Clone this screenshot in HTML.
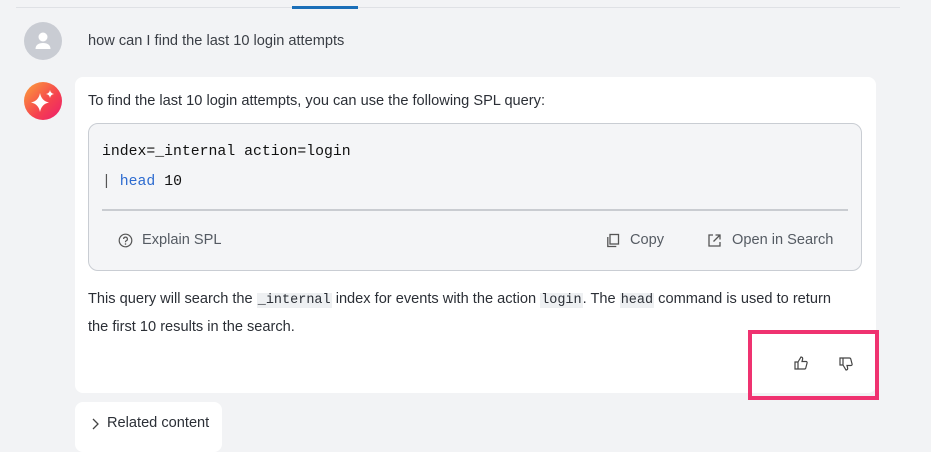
<!DOCTYPE html>
<html><head><style>
*{margin:0;padding:0;box-sizing:border-box}
body{width:931px;height:446px;background:#f2f3f5;font-family:"Liberation Sans",sans-serif;color:#2b2f36;position:relative;overflow:hidden;font-size:14.6px}
.abs{position:absolute}
.mono{font-family:"Liberation Mono",monospace}
code{font-family:"Liberation Mono",monospace;background:#eef0f2;font-size:13.5px;padding:0 1px}
</style></head><body>
<div class="abs" style="left:16px;top:7px;width:884px;height:1px;background:#dfe1e5"></div>
<div class="abs" style="left:292px;top:6px;width:66px;height:3px;background:#1a6fb8"></div>
<div class="abs" style="left:24px;top:22px;width:38px;height:38px;border-radius:50%;background:#c9ccd3">
<svg width="38" height="38" viewBox="0 0 38 38"><circle cx="19" cy="15" r="4.5" fill="#fff"/><path d="M11.5 27c0-4 3-6 7.5-6s7.5 2 7.5 6z" fill="#fff"/></svg></div>
<div class="abs" style="left:88px;top:33px;color:#3a3e45">how can I find the last 10 login attempts</div>
<div class="abs" style="left:24px;top:82px;width:38px;height:38px;border-radius:50%;background:linear-gradient(135deg,#fba23a,#f5404f 60%,#ec1d6e)">
<svg width="38" height="38" viewBox="0 0 38 38"><path d="M16 11 Q17.5 19 25 20.5 Q17.5 22 16 30 Q14.5 22 7 20.5 Q14.5 19 16 11Z" fill="#fff"/><path d="M26 8 Q26.6 11.4 30 12 Q26.6 12.6 26 16 Q25.4 12.6 22 12 Q25.4 11.4 26 8Z" fill="#fff"/></svg></div>
<div class="abs" style="left:75px;top:77px;width:801px;height:316px;background:#fff;border-radius:8px"></div>
<div class="abs" style="left:88px;top:93px;color:#2b2f36">To find the last 10 login attempts, you can use the following SPL query:</div>
<div class="abs" style="left:88px;top:123px;width:774px;height:148px;background:#f4f5f7;border:1px solid #c9cdd3;border-radius:10px"></div>
<div class="abs mono" style="left:102px;top:144px;font-size:14.8px;color:#111">index=_internal action=login</div>
<div class="abs mono" style="left:102px;top:174px;font-size:14.8px;color:#111"><span style="color:#555">|</span> <span style="color:#2d6bd0">head</span> 10</div>
<div class="abs" style="left:102px;top:209px;width:746px;height:2px;background:#c9ccd1"></div>
<svg class="abs" style="left:118px;top:233px" width="15" height="15" viewBox="0 0 15 15"><circle cx="7.5" cy="7.5" r="6.3" fill="none" stroke="#555" stroke-width="1.2"/><path d="M5.6 6a1.9 1.9 0 1 1 2.6 1.8c-.5.2-.7.6-.7 1.1v.4" fill="none" stroke="#555" stroke-width="1.2"/><circle cx="7.5" cy="11" r=".8" fill="#555"/></svg>
<div class="abs" style="left:142px;top:232px;color:#555b63">Explain SPL</div>
<svg class="abs" style="left:606px;top:233px" width="15" height="15" viewBox="0 0 15 15"><rect x="4" y="1.5" width="8.5" height="9.5" fill="none" stroke="#555" stroke-width="1.3"/><path d="M1.8 4v9.5h8.5" fill="none" stroke="#555" stroke-width="1.3"/></svg>
<div class="abs" style="left:630px;top:232px;color:#555b63">Copy</div>
<svg class="abs" style="left:707px;top:233px" width="15" height="15" viewBox="0 0 15 15"><path d="M6 2H2v11h11V9M8.5 2h4.5v4.5M13 2L6.5 8.5" fill="none" stroke="#555" stroke-width="1.3"/></svg>
<div class="abs" style="left:732px;top:232px;color:#555b63">Open in Search</div>
<div class="abs" style="left:88px;top:286px;line-height:26px;width:760px;color:#2b2f36">This query will search the <code>_internal</code> index for events with the action <code>login</code>. The <code>head</code> command is used to return the first 10 results in the search.</div>
<div class="abs" style="left:748px;top:330px;width:131px;height:70px;border:4px solid #ef3270"></div>
<svg class="abs" style="left:793px;top:355px" width="16" height="16" viewBox="0 0 16 16"><path d="M2 7h3v7H2zM5 7l3-5c1 0 2 .8 1.6 2.2L9 6.5h4c.8 0 1.3.7 1.1 1.4l-1.3 5c-.2.7-.8 1.1-1.4 1.1H5" fill="none" stroke="#444" stroke-width="1.2"/></svg>
<svg class="abs" style="left:838px;top:356px" width="16" height="16" viewBox="0 0 16 16"><path d="M2 2h3v7H2zM5 9l3 5c1 0 2-.8 1.6-2.2L9 9.5h4c.8 0 1.3-.7 1.1-1.4l-1.3-5C12.6 2.4 12 2 11.4 2H5" fill="none" stroke="#444" stroke-width="1.2"/></svg>
<div class="abs" style="left:75px;top:402px;width:147px;height:50px;background:#fff;border-radius:8px"></div>
<svg class="abs" style="left:90px;top:417px" width="10" height="14" viewBox="0 0 10 14"><path d="M3 2l5 5-5 5" fill="none" stroke="#444" stroke-width="1.3"/></svg>
<div class="abs" style="left:107px;top:415px;color:#2b2f36">Related content</div>
</body></html>
